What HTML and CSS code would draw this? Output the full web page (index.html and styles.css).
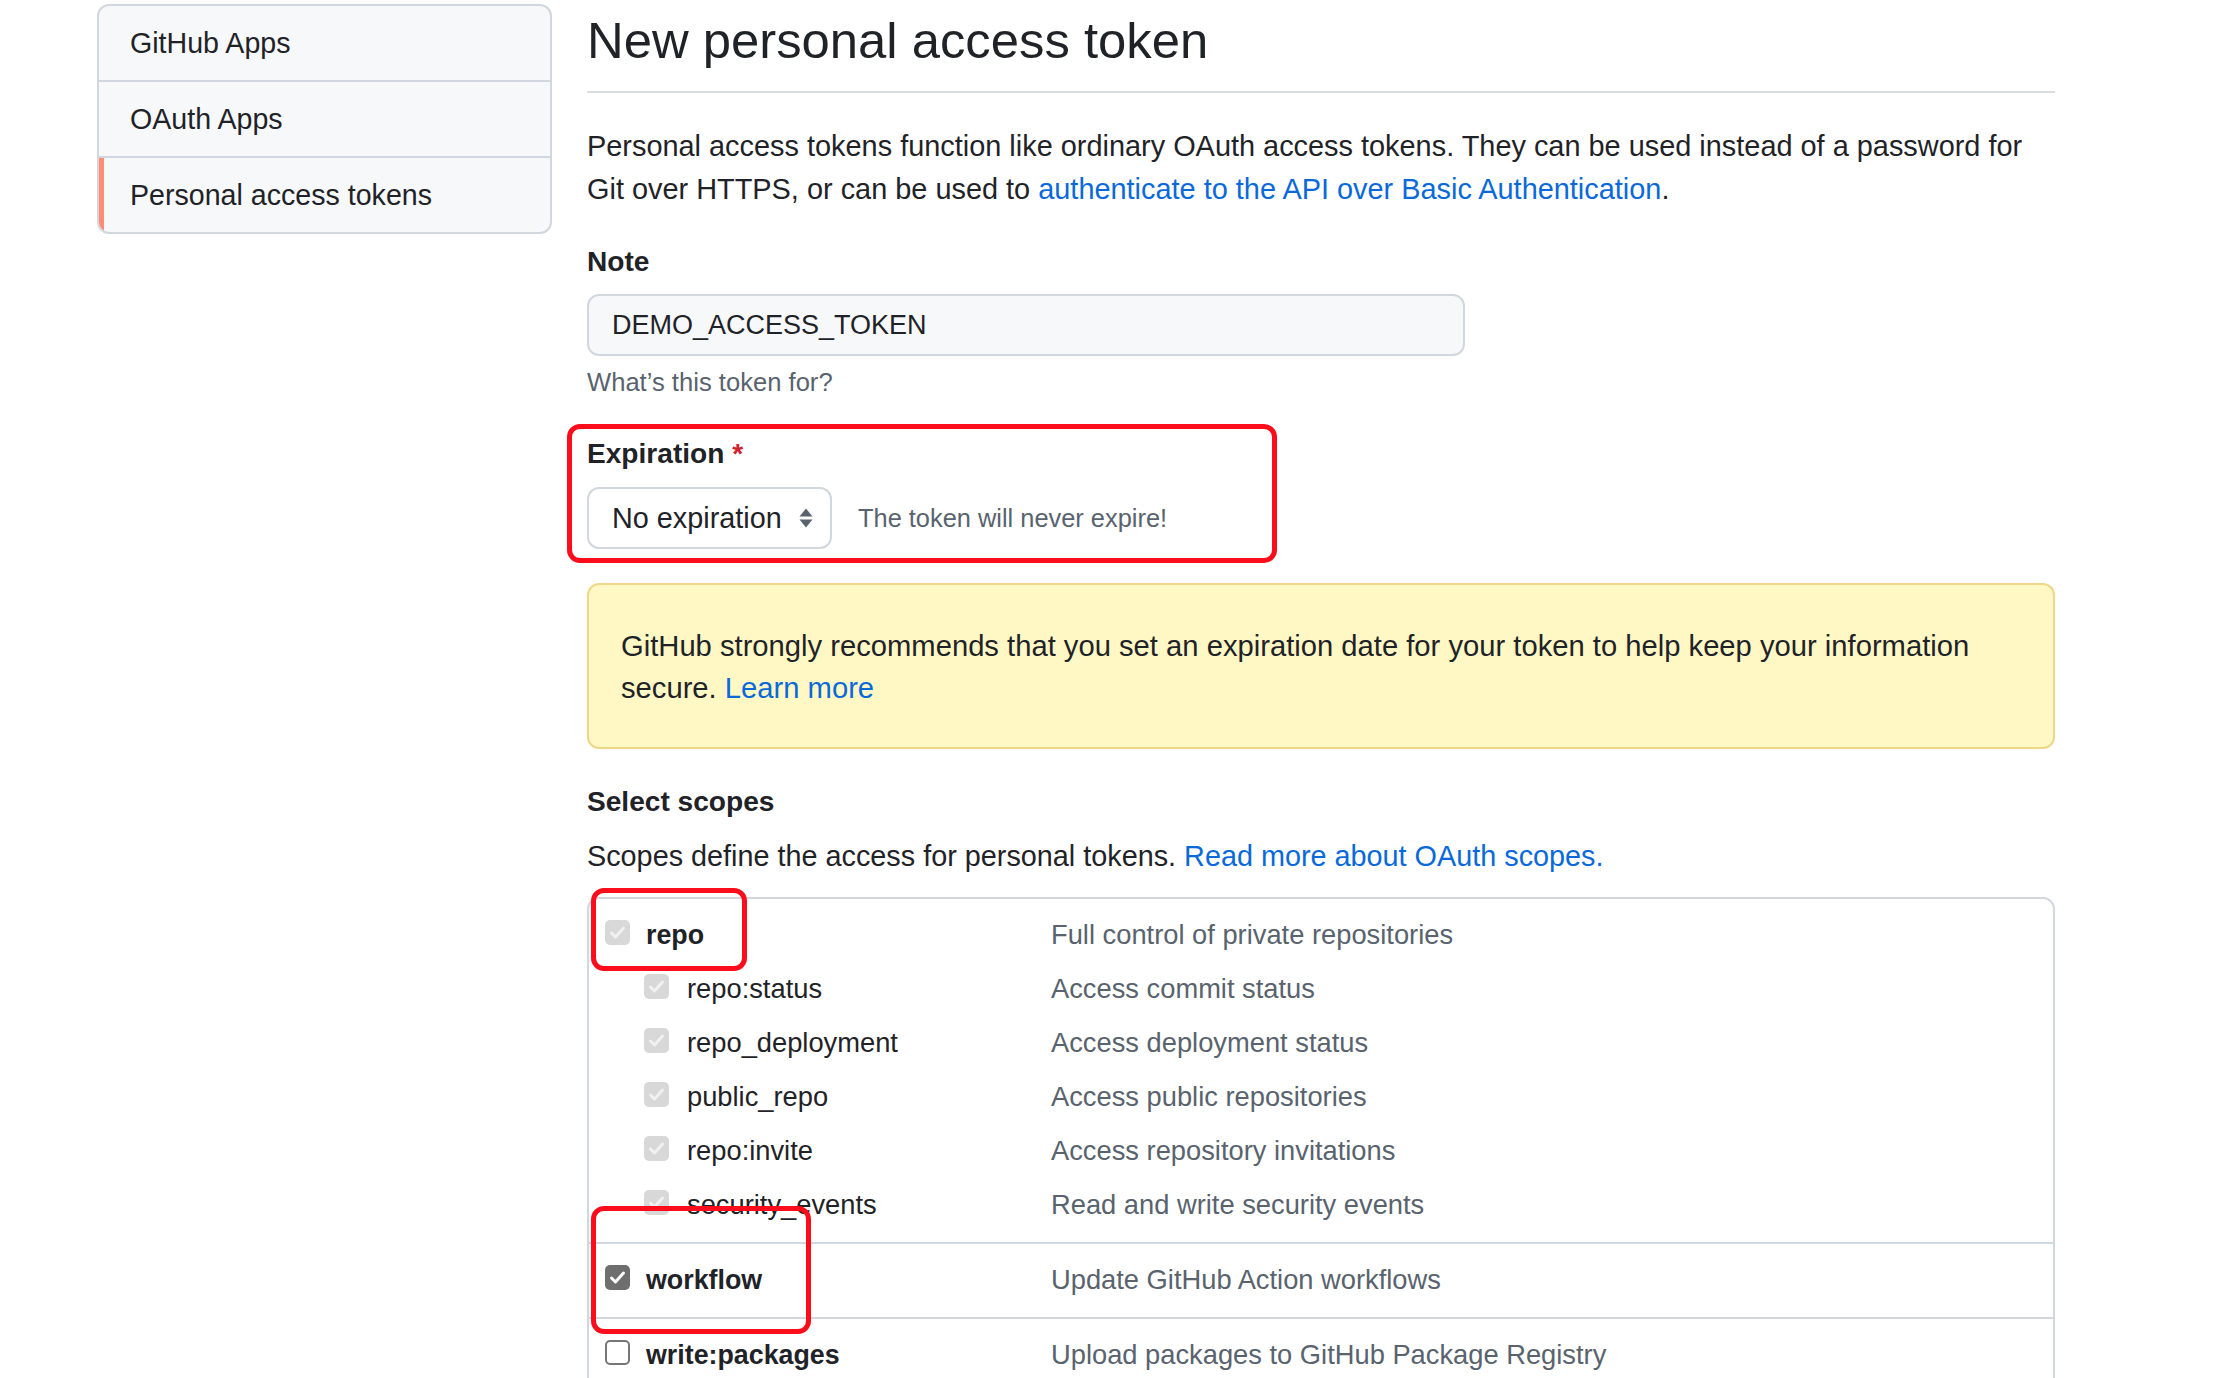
FILE: index.html
```html
<!DOCTYPE html>
<html lang="en">
<head>
<meta charset="utf-8">
<title>New personal access token</title>
<link rel="stylesheet" href="styles.css">
</head>
<body>
<div class="page">
  <nav class="sidebar">
    <a class="menu-item">GitHub Apps</a>
    <a class="menu-item">OAuth Apps</a>
    <a class="menu-item selected">Personal access tokens</a>
  </nav>

  <main class="content">
    <h2 class="subhead">New personal access token</h2>

    <p class="intro">Personal access tokens function like ordinary OAuth access tokens. They can be used instead of a password for<br>Git over HTTPS, or can be used to <a class="link">authenticate to the API over Basic Authentication</a>.</p>

    <div class="form-group note-group">
      <div class="label">Note</div>
      <div class="input">DEMO_ACCESS_TOKEN</div>
      <p class="hint">What’s this token for?</p>
    </div>

    <div class="form-group exp-group">
      <div class="label">Expiration <span class="req">*</span></div>
      <div class="exp-row">
        <div class="select">
          <span>No expiration</span>
          <svg class="arrows" width="16" height="22" viewBox="0 0 16 22"><path d="M1.5 9.5 L8 1.5 L14.5 9.5 Z M1.5 12.5 L8 20.5 L14.5 12.5 Z" fill="#59636e"/></svg>
        </div>
        <span class="exp-note">The token will never expire!</span>
      </div>
    </div>

    <div class="flash">GitHub strongly recommends that you set an expiration date for your token to help keep your information<br>secure. <a class="link">Learn more</a></div>

    <div class="label scopes-title">Select scopes</div>
    <p class="scopes-desc">Scopes define the access for personal tokens. <a class="link">Read more about OAuth scopes.</a></p>

    <div class="scopes">
      <div class="scope-group">
        <div class="scope-row">
          <span class="name"><span class="cb cb-disabled"><svg viewBox="0 0 25 25"><path d="M6.5 13 L10.5 17 L18.5 8"/></svg></span><b>repo</b></span>
          <span class="desc">Full control of private repositories</span>
        </div>
        <div class="scope-row sub">
          <span class="name"><span class="cb cb-disabled"><svg viewBox="0 0 25 25"><path d="M6.5 13 L10.5 17 L18.5 8"/></svg></span>repo:status</span>
          <span class="desc">Access commit status</span>
        </div>
        <div class="scope-row sub">
          <span class="name"><span class="cb cb-disabled"><svg viewBox="0 0 25 25"><path d="M6.5 13 L10.5 17 L18.5 8"/></svg></span>repo_deployment</span>
          <span class="desc">Access deployment status</span>
        </div>
        <div class="scope-row sub">
          <span class="name"><span class="cb cb-disabled"><svg viewBox="0 0 25 25"><path d="M6.5 13 L10.5 17 L18.5 8"/></svg></span>public_repo</span>
          <span class="desc">Access public repositories</span>
        </div>
        <div class="scope-row sub">
          <span class="name"><span class="cb cb-disabled"><svg viewBox="0 0 25 25"><path d="M6.5 13 L10.5 17 L18.5 8"/></svg></span>repo:invite</span>
          <span class="desc">Access repository invitations</span>
        </div>
        <div class="scope-row sub">
          <span class="name"><span class="cb cb-disabled"><svg viewBox="0 0 25 25"><path d="M6.5 13 L10.5 17 L18.5 8"/></svg></span>security_events</span>
          <span class="desc">Read and write security events</span>
        </div>
      </div>
      <div class="scope-group">
        <div class="scope-row">
          <span class="name"><span class="cb cb-checked"><svg viewBox="0 0 25 25"><path d="M6.5 13 L10.5 17 L18.5 8"/></svg></span><b>workflow</b></span>
          <span class="desc">Update GitHub Action workflows</span>
        </div>
      </div>
      <div class="scope-group last">
        <div class="scope-row">
          <span class="name"><span class="cb cb-empty"></span><b>write:packages</b></span>
          <span class="desc">Upload packages to GitHub Package Registry</span>
        </div>
      </div>
    </div>

    <div class="annot annot-exp"></div>
    <div class="annot annot-repo"></div>
    <div class="annot annot-workflow"></div>
  </main>
</div>
</body>
</html>
```

FILE: styles.css
```css
html {
  overflow: hidden;
}

body {
  margin: 0;
  background: #ffffff;
  color: #1f2328;
  font-family: "Liberation Sans", Arial, sans-serif;
  font-size: 28.5px;
}

.page {
  display: flex;
  align-items: flex-start;
  gap: 35px;
  padding-left: 97px;
}

/* Sidebar */
.sidebar {
  box-sizing: border-box;
  width: 455px;
  margin-top: 4px;
  background: #f6f8fa;
  border: 2px solid #d0d7de;
  border-radius: 12px;
  overflow: hidden;
  display: flex;
  flex-direction: column;
}

.menu-item {
  display: block;
  padding: 16px 31px;
  line-height: 42px;
  color: #1f2328;
  font-size: 28.6px;
}

.menu-item + .menu-item {
  border-top: 2px solid #d0d7de;
}

.menu-item.selected {
  box-shadow: inset 5px 0 0 #fd8c73;
}

/* Main */
.content {
  position: relative;
  width: 1468px;
  flex-shrink: 0;
}

.subhead {
  margin: 0;
  padding-top: 11px;
  padding-bottom: 20px;
  font-size: 50.8px;
  line-height: 60px;
  font-weight: 400;
  border-bottom: 2px solid #d8dee4;
}

.intro {
  margin: 32px 0 0;
  font-size: 28.9px;
  line-height: 43px;
}

.link {
  color: #0969da;
}

.label {
  font-weight: 700;
  line-height: 42px;
  font-size: 28.1px;
}

.req {
  color: #cf222e;
}

.form-group {
  display: flex;
  flex-direction: column;
  align-items: flex-start;
}

.note-group {
  margin-top: 30px;
}

.input {
  box-sizing: border-box;
  margin-top: 11px;
  width: 878px;
  height: 62px;
  padding: 0 23px;
  display: flex;
  align-items: center;
  background: #f6f8fa;
  border: 2px solid #d0d7de;
  border-radius: 12px;
  font-size: 27px;
}

.hint {
  margin: 8px 0 0;
  line-height: 36px;
  font-size: 25.6px;
  color: #59636e;
}

.exp-group {
  margin-top: 33px;
}

.exp-row {
  margin-top: 12px;
  display: flex;
  align-items: center;
  gap: 26px;
}

.select {
  box-sizing: border-box;
  width: 245px;
  height: 62px;
  padding: 0 16px 0 23px;
  display: flex;
  align-items: center;
  justify-content: space-between;
  background: #ffffff;
  border: 2px solid #d0d7de;
  border-radius: 12px;
  font-size: 28.8px;
}

.arrows {
  display: block;
}

.exp-note {
  font-size: 25.4px;
  color: #59636e;
}

.flash {
  margin-top: 34px;
  padding: 40px 32px 38px;
  background: #fff8c5;
  border: 2px solid #eed888;
  border-radius: 12px;
  font-size: 29.2px;
  line-height: 42px;
}

.scopes-title {
  margin-top: 32px;
}

.scopes-desc {
  margin: 12px 0 0;
  line-height: 42px;
  font-size: 28.8px;
}

/* Scopes list */
.scopes {
  margin-top: 20px;
  border: 2px solid #d0d7de;
  border-radius: 12px;
}

.scope-group {
  padding: 9px 0 10px;
}

.scope-group.last {
  padding-bottom: 60px;
}

.scope-group + .scope-group {
  border-top: 2px solid #d0d7de;
}

.scope-row {
  display: flex;
  align-items: center;
  height: 54px;
  padding-left: 16px;
}

.name {
  box-sizing: border-box;
  width: 446px;
  flex-shrink: 0;
  display: flex;
  align-items: center;
  gap: 16px;
  font-size: 27.3px;
}

.name b {
  font-size: 26.8px;
}

.scope-row.sub .name {
  padding-left: 39px;
  gap: 18px;
}

.desc {
  font-size: 27.3px;
  color: #59636e;
}

.cb {
  box-sizing: border-box;
  width: 25px;
  height: 25px;
  border-radius: 5px;
  flex-shrink: 0;
  margin-bottom: 5px;
  display: block;
}

.cb svg {
  display: block;
  width: 25px;
  height: 25px;
}

.cb svg path {
  fill: none;
  stroke-width: 3;
  stroke-linecap: round;
  stroke-linejoin: round;
}

.cb-disabled {
  background: #d8d8d8;
}

.cb-disabled svg path {
  stroke: #f1f1f1;
}

.cb-checked {
  background: #6e6e6e;
}

.cb-checked svg path {
  stroke: #ffffff;
}

.cb-empty {
  background: #ffffff;
  border: 2px solid #767676;
}

/* Red annotation boxes over the screenshot */
.annot {
  position: absolute;
  box-sizing: border-box;
  border: 5px solid #fb0d1b;
  border-radius: 13px;
  pointer-events: none;
}

.annot-exp {
  left: -20px;
  top: 424px;
  width: 710px;
  height: 139px;
}

.annot-repo {
  left: 4px;
  top: 888px;
  width: 156px;
  height: 83px;
}

.annot-workflow {
  left: 4px;
  top: 1206px;
  width: 220px;
  height: 128px;
}
```
